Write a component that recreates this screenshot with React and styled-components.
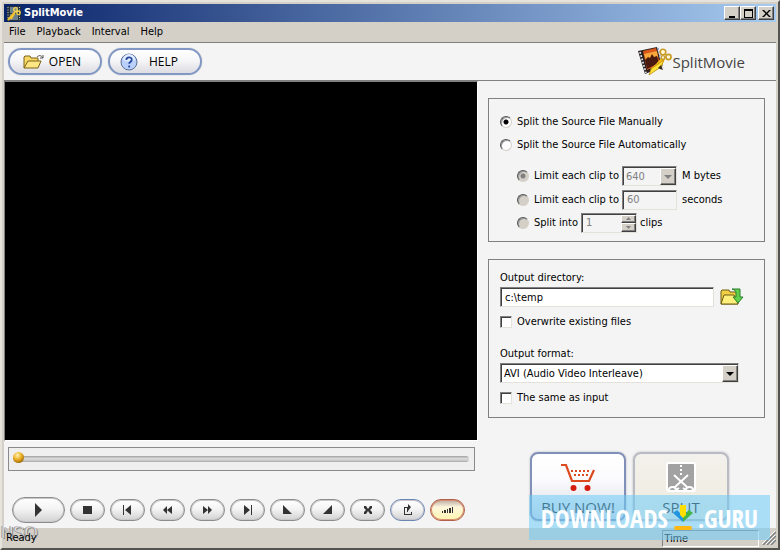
import React, { useState } from 'react';
import styled, { createGlobalStyle, css } from 'styled-components';

const GlobalStyle = createGlobalStyle`
  * {
    box-sizing: border-box;
  }

  body {
    margin: 0;
    background: #d4d0c8;
    color: #000;
    font: 11px/14px 'DejaVu Sans Condensed', 'DejaVu Sans', sans-serif;
  }

  button, input, select {
    margin: 0;
    padding: 0;
    color: inherit;
    font: inherit;
  }

  svg {
    display: block;
    flex: none;
  }
`;

const Window = styled.div`
  position: relative;
  display: flex;
  flex-direction: column;
  min-height: 100vh;
  padding: 2px 2px 0;
  background: #d4d0c8;
  border-style: solid;
  border-width: 2px;
  border-color: #e6e3dc #55534f #55534f #e6e3dc;
`;

const TitleBar = styled.header`
  display: flex;
  align-items: center;
  height: 18px;
  padding: 0 2px 0 3px;
  background: linear-gradient(90deg, #0a246a, #a6caf0);
`;

const Title = styled.h1`
  flex: 1;
  margin: 0 0 0 3px;
  color: #fff;
  font-size: 11px;
  font-weight: 700;
`;

const raised = css`
  background: #d4d0c8;
  border: 1px solid;
  border-color: #fff #404040 #404040 #fff;
  box-shadow: inset -1px -1px 0 #808080;
`;

const sunken = css`
  border: 1px solid;
  border-color: #808080 #e4e1da #e4e1da #808080;
  box-shadow: inset 1px 1px 0 #404040;
`;

const CaptionButton = styled.button`
  ${raised}
  display: grid;
  place-items: center;
  width: 16px;
  height: 14px;
  margin-left: ${({ $apart }) => ($apart ? '2px' : 0)};
`;

const MenuBar = styled.nav`
  display: flex;
  align-items: center;
  gap: 11px;
  height: 20px;
  padding: 0 5px;
`;

const MenuItem = styled.button`
  background: none;
  border: 0;
`;

const Toolbar = styled.div`
  display: flex;
  align-items: center;
  gap: 6px;
  height: 39px;
  padding: 0 31px 0 4px;
  background: #f4f4f4;
  border-top: 1px solid #808080;
  border-bottom: 1px solid #808080;
`;

const PillButton = styled.button`
  display: flex;
  align-items: center;
  justify-content: center;
  gap: ${({ $gap }) => $gap}px;
  width: 94px;
  height: 27px;
  padding: 0 ${({ $inset }) => $inset}px 0 0;
  background: linear-gradient(#fff, #f6f6f8 45%, #dcdce2);
  border: 2px solid #8298c4;
  border-radius: 14px;
  box-shadow: 0 0 1px #999;
  font: 12px/16px 'Open Sans', sans-serif;
`;

const Brand = styled.div`
  display: flex;
  align-items: center;
  margin-left: auto;
  color: #444;
  font: 15px/20px 'Open Sans', sans-serif;
`;

const Workspace = styled.main`
  display: grid;
  grid-template-columns: 1fr 298px;
  flex: 1;
  background: #f4f4f4;
`;

const Player = styled.section`
  display: flex;
  flex-direction: column;
  justify-content: space-between;
`;

const Screen = styled.div`
  flex: 1;
  background: #000;
  border: 1px solid;
  border-color: #808080 #fff #fff #808080;
`;

const Seek = styled.label`
  display: flex;
  align-items: center;
  height: 24px;
  margin: 6px 3px 26px 4px;
  padding: 0 5px 0 4px;
  background: #efefef;
  border: 1px solid #8a8a8a;
`;

const SeekRange = styled.input`
  flex: 1;
  height: 14px;
  appearance: none;
  background: none;

  &::-webkit-slider-runnable-track {
    height: 6px;
    background: linear-gradient(#a0a0a0, #d8d8d8 40%, #d0d0d0 70%, #a4a4a4);
    border-radius: 3px;
  }

  &::-webkit-slider-thumb {
    width: 11px;
    height: 11px;
    margin-top: -4px;
    appearance: none;
    background: radial-gradient(circle at 40% 30%, #fff3b0, #e8a91c 45%, #6b4300);
    border-radius: 50%;
  }
`;

const Transport = styled.div`
  display: flex;
  align-items: center;
  gap: 5px;
  padding: 0 0 5px 8px;
`;

const edges = { gray: '#8c8c8c', blue: '#6c86b4', red: '#b0604c' };

const RoundButton = styled.button`
  display: grid;
  place-items: center;
  width: ${({ $large }) => ($large ? 53 : 35)}px;
  height: ${({ $large }) => ($large ? 26 : 22)}px;
  background: ${({ $tone }) =>
    $tone === 'red'
      ? 'linear-gradient(#b9a9a4, #fdf6dc 35%, #fff6b0)'
      : 'linear-gradient(#fff, #f4f4f4 45%, #d2d2d2)'};
  border: 1px solid ${({ $tone }) => edges[$tone || 'gray']};
  border-radius: 13px;
  box-shadow: inset 0 0 0 1px ${({ $tone }) => ($tone === 'red' ? '#d89070' : '#c8c8cc')};
`;

const Settings = styled.section`
  display: flex;
  flex-direction: column;
  padding: 17px 11px 7px 10px;
`;

const Panel = styled.fieldset`
  display: flex;
  flex-direction: column;
  min-width: 0;
  margin: 0 0 17px;
  padding: 11px 11px 7px;
  border: 1px solid #808080;
`;

const Option = styled.div`
  display: flex;
  align-items: center;
  gap: 3px;
  height: ${({ $tall }) => ($tall ? 24 : 23)}px;
  margin-left: ${({ $nested }) => ($nested ? 17 : 0)}px;
  white-space: nowrap;
`;

const Suffix = styled.span`
  margin-left: ${({ $wide }) => ($wide ? 2 : 0)}px;
`;

const Gap = styled.div`
  height: ${({ $size }) => $size}px;
`;

const Radio = styled.input.attrs({ type: 'radio' })`
  flex: none;
  width: 12px;
  height: 12px;
  margin-right: 2px;
  appearance: none;
  background: #fff;
  border: 1px solid;
  border-color: #555 #d4d0c8 #d4d0c8 #555;
  border-radius: 50%;
  box-shadow: inset 1px 1px 0 #999;

  &:checked {
    background: radial-gradient(circle, #000 2px, #fff 3px);
  }

  &:disabled {
    background: #d4d0c8;
  }

  &:disabled:checked {
    background: radial-gradient(circle, #808080 2px, #d4d0c8 3px);
  }
`;

const Check = styled.input.attrs({ type: 'checkbox' })`
  ${sunken}
  flex: none;
  width: 12px;
  height: 12px;
  margin-right: 2px;
  appearance: none;
  background: #fff;
`;

const TextBox = styled.input`
  ${sunken}
  width: ${({ $width }) => $width}px;
  height: 20px;
  padding: 0 4px;
  background: #fff;

  &:disabled {
    background: #f4f4f4;
    color: #808080;
  }
`;

const SelectFrame = styled.div`
  ${sunken}
  display: grid;
  width: ${({ $width }) => $width}px;
  height: 20px;
  background: ${({ $off }) => ($off ? '#f4f4f4' : '#fff')};
`;

const Select = styled.select`
  grid-area: 1 / 1;
  padding: 1px 18px 0 3px;
  appearance: none;
  background: none;
  border: 0;

  &:disabled {
    color: #808080;
    opacity: 1;
  }
`;

const DropArrow = styled.span`
  ${raised}
  grid-area: 1 / 1;
  justify-self: end;
  display: grid;
  place-items: center;
  width: 16px;
  margin-top: 1px;
  pointer-events: none;
`;

const Spinner = styled.div`
  ${sunken}
  display: flex;
  width: 56px;
  height: 20px;
  padding: 1px 0 0 1px;
`;

const SpinnerInput = styled.input`
  flex: 1;
  min-width: 0;
  padding: 0 3px;
  background: none;
  border: 0;
  color: #808080;
`;

const SpinnerButtons = styled.div`
  display: grid;
  width: 15px;
`;

const SpinnerButton = styled.button`
  ${raised}
  display: grid;
  place-items: center;
  min-height: 0;
`;

const FieldLabel = styled.label`
  height: 16px;
`;

const PathRow = styled.div`
  display: flex;
  align-items: center;
  gap: 6px;
`;

const IconButton = styled.button`
  background: none;
  border: 0;
`;

const Actions = styled.div`
  display: flex;
  gap: 7px;
  margin-top: auto;
  padding-left: 42px;
`;

const ActionButton = styled.button`
  display: flex;
  flex-direction: column;
  align-items: center;
  gap: 5px;
  width: 96px;
  height: 69px;
  padding: 8px 0 0;
  background: ${({ $off }) =>
    $off ? 'linear-gradient(#f3f1ec, #efebdf)' : 'linear-gradient(#fff, #fbfbfd 40%, #d6d9e2)'};
  border: 2px solid ${({ $off }) => ($off ? '#b8bac4' : '#8090b8')};
  border-radius: 8px;
  box-shadow: 0 0 2px #aaa;
  color: #111;
  font: 15px/20px 'Open Sans', sans-serif;
`;

const StatusBar = styled.footer`
  display: flex;
  align-items: center;
  height: 20px;
  padding: 0 0 0 2px;
`;

const StatusText = styled.span`
  position: relative;
  z-index: 1;
  flex: 1;
`;

const TimeBox = styled.span`
  width: 97px;
  height: 17px;
  margin-right: 3px;
  padding-left: 1px;
  border: 1px solid;
  border-color: #808080 #fff #fff #808080;
  font: 11px/15px 'Liberation Sans', sans-serif;
`;

const Banner = styled.div`
  position: absolute;
  right: 8px;
  bottom: 8px;
  display: flex;
  align-items: center;
  justify-content: center;
  gap: 4px;
  width: 241px;
  height: 45px;
  background: rgba(110, 204, 250, 0.55);
  color: #fff;
  font: 700 25px/30px 'Open Sans Condensed', 'Liberation Sans Narrow', sans-serif;
  pointer-events: none;
`;

const Stamp = styled.div`
  position: absolute;
  bottom: 5px;
  left: -1px;
  color: rgba(255, 255, 255, 0.6);
  font: 17px/20px 'Liberation Sans', sans-serif;
  text-shadow: 1px 1px 0 #888, -1px 0 0 #999;
  pointer-events: none;
`;

const FilmIcon = () => (
  <svg width="14" height="15" viewBox="0 0 14 15">
    <path d="M0 0h14v15H0z" fill="#27333c" />
    <path d="M3 1h8v6H3zM3 8h8v6H3z" fill="#6b7f8c" />
    <path d="M1 1v13M12.5 1v13" stroke="#b9c4cc" strokeDasharray="1 1.5" />
    <path d="M1 14 8 6M4 13l4-7" stroke="#f1c232" strokeWidth="2" />
    <circle cx="8.5" cy="3.5" r="1.8" fill="none" stroke="#ffd84a" strokeWidth="1.3" />
    <circle cx="11.5" cy="6.8" r="1.8" fill="none" stroke="#ffd84a" strokeWidth="1.3" />
  </svg>
);

const BrandIcon = () => (
  <svg width="34" height="29" viewBox="0 0 34 29">
    <path d="M0 4 19 0l5 20-17 7z" fill="#2a211d" />
    <path d="M5 4 18 1l4 16-13 6z" fill="#d9561c" />
    <path d="m6 7 13-3 1 6-12 3z" fill="#f9a63a" />
    <path d="m7 13 3-3 2 1 2-4 2 3 3-1 2 7-12 6z" fill="#4a1a10" />
    <path d="m2 5 6 21" stroke="#dfe3f5" strokeWidth="1.7" strokeDasharray="1.8 1.6" />
    <path d="m20 1 5 20" stroke="#8d96c8" strokeWidth="1.4" strokeDasharray="1.8 1.6" />
    <path d="m12 22 6-5 6-7 3 2-4 9z" fill="#f4b912" />
    <path d="m11 28 2-6 10-7 3-3-3 8z" fill="#ffe236" stroke="#b57e06" strokeWidth=".7" />
    <path d="m20 21 3-3 2 5-3-1z" fill="#3a2c22" />
    <circle cx="25" cy="5" r="2.8" fill="#fff8d4" stroke="#c99a28" strokeWidth="1.6" />
    <circle cx="30.5" cy="10" r="2.6" fill="#fff8d4" stroke="#c99a28" strokeWidth="1.6" />
    <circle cx="25" cy="10.5" r="1.8" fill="#fff8d4" stroke="#c99a28" strokeWidth="1.3" />
  </svg>
);

const OpenIcon = () => (
  <svg width="22" height="16" viewBox="0 0 22 16" strokeLinejoin="round">
    <path d="M1 14V3l1-1h5l1 2h7v4" fill="#f8d864" stroke="#7a6015" />
    <path d="m1 14 4-7h13l-3 7z" fill="#ffe684" stroke="#7a6015" />
    <path d="M14 3c2-2 4-2 6 1M20 1v3h-3" fill="none" stroke="#555" />
  </svg>
);

const FolderSaveIcon = () => (
  <svg width="24" height="18" viewBox="0 0 24 18" strokeLinejoin="round">
    <path d="M1 16V3l1-1h7l1 2h8v12z" fill="#f0cf44" stroke="#6d5c16" />
    <path d="m1 16 3-9h10l2 4 2 5z" fill="#fff07c" stroke="#6d5c16" />
    <path d="M12 1h8v8h3l-5 6-5-6h3V5c0-2-1-3-4-4z" fill="#62d04c" stroke="#287f2c" />
  </svg>
);

const HelpIcon = () => (
  <svg width="18" height="18" viewBox="0 0 18 18">
    <circle cx="9" cy="9" r="8" fill="#b9d0fc" stroke="#5a7096" />
    <path d="M3 7a6 6 0 0 1 12 0c-4 2-8 2-12 0z" fill="#e2edff" />
    <path d="M6.3 7c0-3.5 5.5-3.5 5.5-.3 0 2-2.6 2-2.6 4M9.2 12.5v2" fill="none" stroke="#25489c" strokeWidth="1.8" />
  </svg>
);

const CartIcon = () => (
  <svg width="36" height="30" viewBox="0 0 36 30" fill="none">
    <path d="M1 3h5l6 16h17l5-11" stroke="#dc4a20" strokeWidth="2.2" />
    <path d="M11 9h20M14 13h14" stroke="#dc4a20" strokeWidth="2" strokeDasharray="2 2" />
    <circle cx="13.5" cy="26" r="3" fill="#d41c10" />
    <circle cx="27.5" cy="26" r="3" fill="#d41c10" />
  </svg>
);

const SplitIcon = () => (
  <svg width="30" height="30" viewBox="0 0 30 30" fill="none">
    <rect x="1" y="1" width="28" height="28" rx="2" fill="#a2a2a2" stroke="#fff" strokeWidth="2" />
    <path d="M15 3v12" stroke="#fff" strokeWidth="2" strokeDasharray="2 2" />
    <path d="m8 13 13 12M22 13 9 25" stroke="#fff" strokeWidth="2" />
    <path d="M3 28c0-4 7-4 7 0M20 28c0-4 7-4 7 0M10 28l3-2M20 28l-3-2" stroke="#fff" strokeWidth="2" />
  </svg>
);

const DownloadMark = () => (
  <svg width="22" height="28" viewBox="0 0 22 28">
    <path d="m1 9 4-3 6 6v6z" fill="#2196e0" />
    <path d="m21 9-4-3-6 6v6z" fill="#43b649" />
    <path d="M8 1h6v10l-3 3-3-3z" fill="#ffdf00" />
    <rect x="2" y="22" width="18" height="4" rx="2" fill="#fdb813" />
  </svg>
);

const Down = ({ color = '#000' }) => (
  <svg width="8" height="4" viewBox="0 0 8 4">
    <path d="M0 0h8L4 4z" fill={color} />
  </svg>
);

const Tick = ({ up }) => (
  <svg width="5" height="3" viewBox="0 0 5 3">
    <path d={up ? 'M0 3h5L2.5 0z' : 'M0 0h5L2.5 3z'} fill="#808080" />
  </svg>
);

const captions = [
  { label: 'Minimize', d: 'M1 7h6v2H1z' },
  { label: 'Maximize', d: 'M0 0h9v9H0zM1 2v6h7V2z' },
  { label: 'Close', d: 'M0 1h2l2.5 2.5L7 1h2L5.5 4.5 9 8H7L4.5 5.5 2 8H0l3.5-3.5z' },
];

const transport = [
  { label: 'Play', d: 'M4 0l7 7-7 7z', large: true },
  { label: 'Stop', d: 'M3 3h9v8H3z' },
  { label: 'Previous frame', d: 'M3 2h1v10H3zM11 2v10L5 7z' },
  { label: 'Rewind', d: 'M7 3v8L3 7zM12 3v8L7 7z' },
  { label: 'Forward', d: 'M3 3v8l5-4zM8 3v8l4-4z' },
  { label: 'Next frame', d: 'M11 2h1v10h-1zM4 2v10l6-5z' },
  { label: 'Mark start', d: 'M3 2v9h9z' },
  { label: 'Mark end', d: 'M12 2v9H3z' },
  { label: 'Clear marks', d: 'M4 3h2l2 3 2-3h2v2l-2 2 2 2v2h-2L8 8l-2 3H4V9l2-2-2-2z' },
  { label: 'Export', d: 'M4 4h3v1H5v6h6V9h1v3H4zM7 4h1V1l3 3-3 4V5v4H7z', tone: 'blue' },
  { label: 'Volume', d: 'M2 8h1v2H2zM4 7h2v3H4zM7 6h1v4H7zM9 5h2v5H9zM12 4h1v6h-1z', tone: 'red' },
];

export default function App() {
  const [mode, setMode] = useState('manual');
  const [directory, setDirectory] = useState('c:\\temp');

  return (
    <Window>
      <GlobalStyle />
      <TitleBar>
        <FilmIcon />
        <Title>SplitMovie</Title>
        {captions.map(({ label, d }) => (
          <CaptionButton key={label} aria-label={label} $apart={label === 'Close'}>
            <svg width="9" height="9" viewBox="0 0 9 9">
              <path d={d} fillRule="evenodd" />
            </svg>
          </CaptionButton>
        ))}
      </TitleBar>

      <MenuBar>
        {['File', 'Playback', 'Interval', 'Help'].map((item) => (
          <MenuItem key={item}>{item}</MenuItem>
        ))}
      </MenuBar>

      <Toolbar>
        <PillButton $gap={4} $inset={6}>
          <OpenIcon />
          OPEN
        </PillButton>
        <PillButton $gap={11} $inset={12}>
          <HelpIcon />
          HELP
        </PillButton>
        <Brand>
          <BrandIcon />
          SplitMovie
        </Brand>
      </Toolbar>

      <Workspace>
        <Player>
          <Screen />
          <Seek>
            <SeekRange type="range" defaultValue="0" aria-label="Position" />
          </Seek>
          <Transport>
            {transport.map(({ label, d, large, tone }) => (
              <RoundButton key={label} aria-label={label} $large={large} $tone={tone}>
                <svg width="15" height="14" viewBox="0 0 15 14">
                  <path d={d} fill="#333" />
                </svg>
              </RoundButton>
            ))}
          </Transport>
        </Player>

        <Settings>
          <Panel>
            <Option>
              <Radio id="manual" name="mode" checked={mode === 'manual'} onChange={() => setMode('manual')} />
              <label htmlFor="manual">Split the Source File Manually</label>
            </Option>
            <Option>
              <Radio id="auto" name="mode" checked={mode === 'auto'} onChange={() => setMode('auto')} />
              <label htmlFor="auto">Split the Source File Automatically</label>
            </Option>
            <Gap $size={8} />
            <Option $nested $tall>
              <Radio id="by-size" name="limit" defaultChecked disabled />
              <label htmlFor="by-size">Limit each clip to</label>
              <SelectFrame $width={55} $off>
                <Select aria-label="Clip size" disabled>
                  <option>640</option>
                </Select>
                <DropArrow>
                  <Down color="#808080" />
                </DropArrow>
              </SelectFrame>
              <Suffix $wide>M bytes</Suffix>
            </Option>
            <Option $nested>
              <Radio id="by-time" name="limit" disabled />
              <label htmlFor="by-time">Limit each clip to</label>
              <TextBox $width={55} defaultValue="60" aria-label="Clip seconds" disabled />
              <Suffix $wide>seconds</Suffix>
            </Option>
            <Option $nested>
              <Radio id="by-count" name="limit" disabled />
              <label htmlFor="by-count">Split into</label>
              <Spinner>
                <SpinnerInput defaultValue="1" aria-label="Clip count" disabled />
                <SpinnerButtons>
                  <SpinnerButton aria-label="More clips" disabled>
                    <Tick up />
                  </SpinnerButton>
                  <SpinnerButton aria-label="Fewer clips" disabled>
                    <Tick />
                  </SpinnerButton>
                </SpinnerButtons>
              </Spinner>
              <Suffix>clips</Suffix>
            </Option>
          </Panel>

          <Panel>
            <FieldLabel htmlFor="directory">Output directory:</FieldLabel>
            <PathRow>
              <TextBox
                id="directory"
                $width={214}
                value={directory}
                onChange={(e) => setDirectory(e.target.value)}
              />
              <IconButton aria-label="Browse">
                <FolderSaveIcon />
              </IconButton>
            </PathRow>
            <Gap $size={3} />
            <Option $tall>
              <Check id="overwrite" />
              <label htmlFor="overwrite">Overwrite existing files</label>
            </Option>
            <Gap $size={13} />
            <FieldLabel htmlFor="format">Output format:</FieldLabel>
            <SelectFrame $width={239}>
              <Select id="format">
                <option>AVI (Audio Video Interleave)</option>
              </Select>
              <DropArrow>
                <Down />
              </DropArrow>
            </SelectFrame>
            <Gap $size={3} />
            <Option $tall>
              <Check id="same" />
              <label htmlFor="same">The same as input</label>
            </Option>
          </Panel>

          <Actions>
            <ActionButton>
              <CartIcon />
              BUY NOW!
            </ActionButton>
            <ActionButton $off>
              <SplitIcon />
              SPLIT
            </ActionButton>
          </Actions>
        </Settings>
      </Workspace>

      <StatusBar>
        <StatusText>Ready</StatusText>
        <TimeBox>Time</TimeBox>
        <svg width="14" height="14" viewBox="0 0 14 14">
          <path d="M1 14 14 1M5 14l9-9M9 14l5-5" stroke="#808080" strokeWidth="1.5" />
          <path d="M0 13 13 0M4 13l9-9M8 13l5-5" stroke="#fff" />
        </svg>
      </StatusBar>

      <Stamp>NSO</Stamp>
      <Banner>
        <span>DOWNLOADS</span>
        <DownloadMark />
        <span>.GURU</span>
      </Banner>
    </Window>
  );
}
